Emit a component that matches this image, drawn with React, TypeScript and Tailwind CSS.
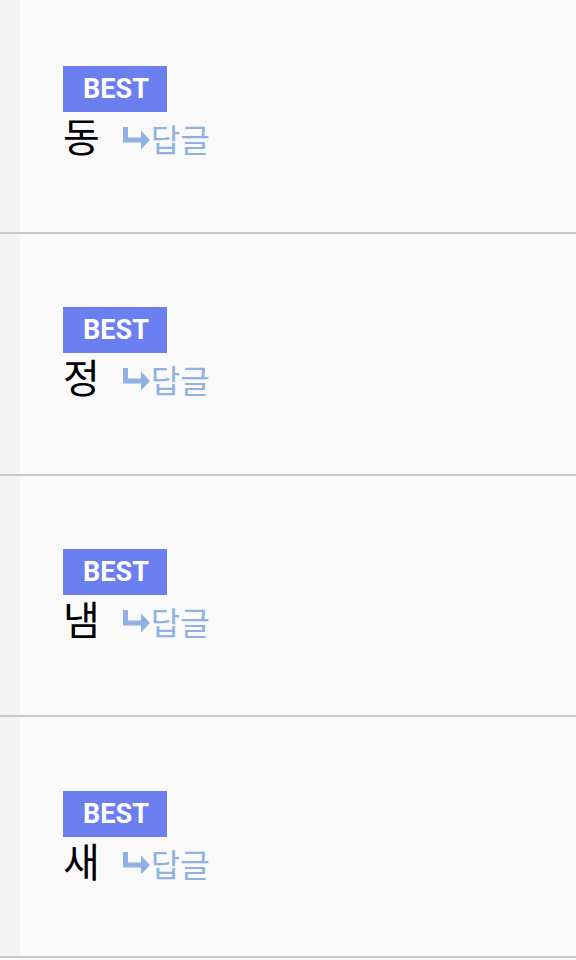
const rows = [
  { name: '동', h: 'h-[234px]', pt: 'pt-[66px]' },
  { name: '정', h: 'h-[242px]', pt: 'pt-[73px]' },
  { name: '냄', h: 'h-[241px]', pt: 'pt-[73px]' },
  { name: '새', h: 'h-[241px]', pt: 'pt-[74px]' },
];

function ReplyArrow() {
  return (
    <svg width="28" height="22" viewBox="0 0 28 22" className="shrink-0">
      <path d="M2.5 0 V13 H19" fill="none" stroke="#8fb1e3" strokeWidth="5" />
      <path d="M18 3.5 L27 13 L18 22.5 Z" fill="#8fb1e3" />
    </svg>
  );
}

function CommentRow({ name, h, pt }: { name: string; h: string; pt: string }) {
  return (
    <div className={`flex border-b-2 border-[#c8c8c8] ${h}`}>
      <div className="w-5 shrink-0 bg-[#f3f3f3]" />
      <div className={`flex flex-1 flex-col bg-[#fafafa] pl-[43px] ${pt}`}>
        <div className="flex h-[46px] w-[104px] items-center justify-center bg-[#6b7ff0] pl-[2px] font-['Roboto',sans-serif] text-[27px] font-bold text-white">
          BEST
        </div>
        <div className="flex items-center font-['Noto_Sans_CJK_KR',sans-serif]">
          <span className="text-[40px] leading-[44px] text-black">{name}</span>
          <span className="ml-[23px] mt-[6px] flex items-center text-[32px] leading-[40px] text-[#8fb1e3]">
            <ReplyArrow />
            답글
          </span>
        </div>
      </div>
    </div>
  );
}

export default function App() {
  return (
    <div className="h-[960px] w-[576px] overflow-hidden bg-[#fafafa]">
      {rows.map((r) => (
        <CommentRow key={r.name} name={r.name} h={r.h} pt={r.pt} />
      ))}
    </div>
  );
}
